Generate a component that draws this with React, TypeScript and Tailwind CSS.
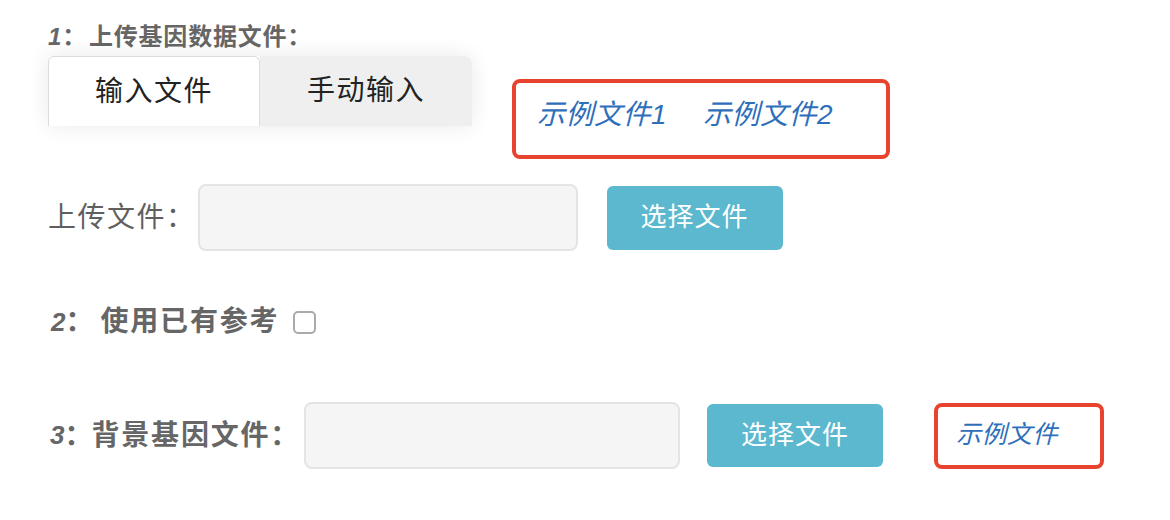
export default function App() {
  return (
    <div
      className="w-[1170px] h-[520px] bg-white pl-[48px] pt-[21px] text-[#666]"
      style={{ fontFamily: '"Liberation Sans", "Noto Sans CJK SC", sans-serif' }}
    >
      {/* step 1 */}
      <div className="flex items-center text-[24px] leading-[32px] font-semibold tracking-[0.8px]">
        <i className="font-bold">1</i>
        <span>：</span>
        <span className="ml-[2px]">上传基因数据文件：</span>
      </div>

      <div className="flex items-start mt-[3px]">
        <div className="flex w-[424px] h-[70px] shadow-[0_0_22px_rgba(0,0,0,0.09)] rounded-tr-lg">
          <div className="w-[212px] h-full bg-white border border-b-0 border-[#dcdcdc] rounded-t-md flex items-center justify-center text-[28px] tracking-[1.5px] text-[#222]">
            输入文件
          </div>
          <div className="flex-1 h-full bg-[#efefef] rounded-tr-lg flex items-center justify-center text-[28px] tracking-[1.5px] text-[#222]">
            手动输入
          </div>
        </div>
        <div className="ml-[40px] mt-[23px] w-[378px] h-[80px] border-4 border-[#e8432e] rounded-lg flex items-center pl-[21px] gap-[36px] pb-[8px]">
          <a className="italic text-[28px] tracking-[0.5px] text-[#2f6fba] cursor-pointer">示例文件1</a>
          <a className="italic text-[28px] tracking-[0.5px] text-[#2f6fba] cursor-pointer">示例文件2</a>
        </div>
      </div>

      <div className="flex items-center mt-[25px] h-[67px]">
        <span className="text-[28px] tracking-[1.5px] text-[#5f5f5f]">上传文件：</span>
        <div className="ml-[2px] w-[380px] h-[67px] bg-[#f5f5f5] border-2 border-[#e4e4e4] rounded-lg" />
        <button className="ml-[29px] w-[176px] h-[64px] bg-[#5bb8ce] rounded-md text-white text-[26px] tracking-[1px]">
          选择文件
        </button>
      </div>

      {/* step 2 */}
      <div className="flex items-center mt-[51px] h-[40px] font-semibold text-[28px]">
        <i className="ml-[3px] text-[26px] font-bold">2</i>
        <span>：</span>
        <span className="ml-[7px] tracking-[1.8px]">使用已有参考</span>
        <span className="ml-[14px] w-[23px] h-[23px] border-2 border-[#aaa] rounded-[5px] bg-white" />
      </div>

      {/* step 3 */}
      <div className="flex items-center mt-[60px] h-[67px]">
        <span className="flex items-center text-[28px] font-semibold">
          <i className="ml-[2px] text-[26px] font-bold">3</i>
          <span>：</span>
          <span className="ml-[-1px] tracking-[1.8px]">背景基因文件：</span>
        </span>
        <div className="ml-[4px] w-[376px] h-[67px] bg-[#f5f5f5] border-2 border-[#e4e4e4] rounded-lg" />
        <button className="ml-[27px] w-[176px] h-[63px] bg-[#5bb8ce] rounded-md text-white text-[26px] tracking-[1px]">
          选择文件
        </button>
        <div className="ml-[51px] w-[170px] h-[66px] border-4 border-[#e8432e] rounded-lg flex items-center pl-[18px] pb-[2px]">
          <a className="italic text-[25px] tracking-[0.5px] text-[#2f6fba] cursor-pointer">示例文件</a>
        </div>
      </div>
    </div>
  );
}
